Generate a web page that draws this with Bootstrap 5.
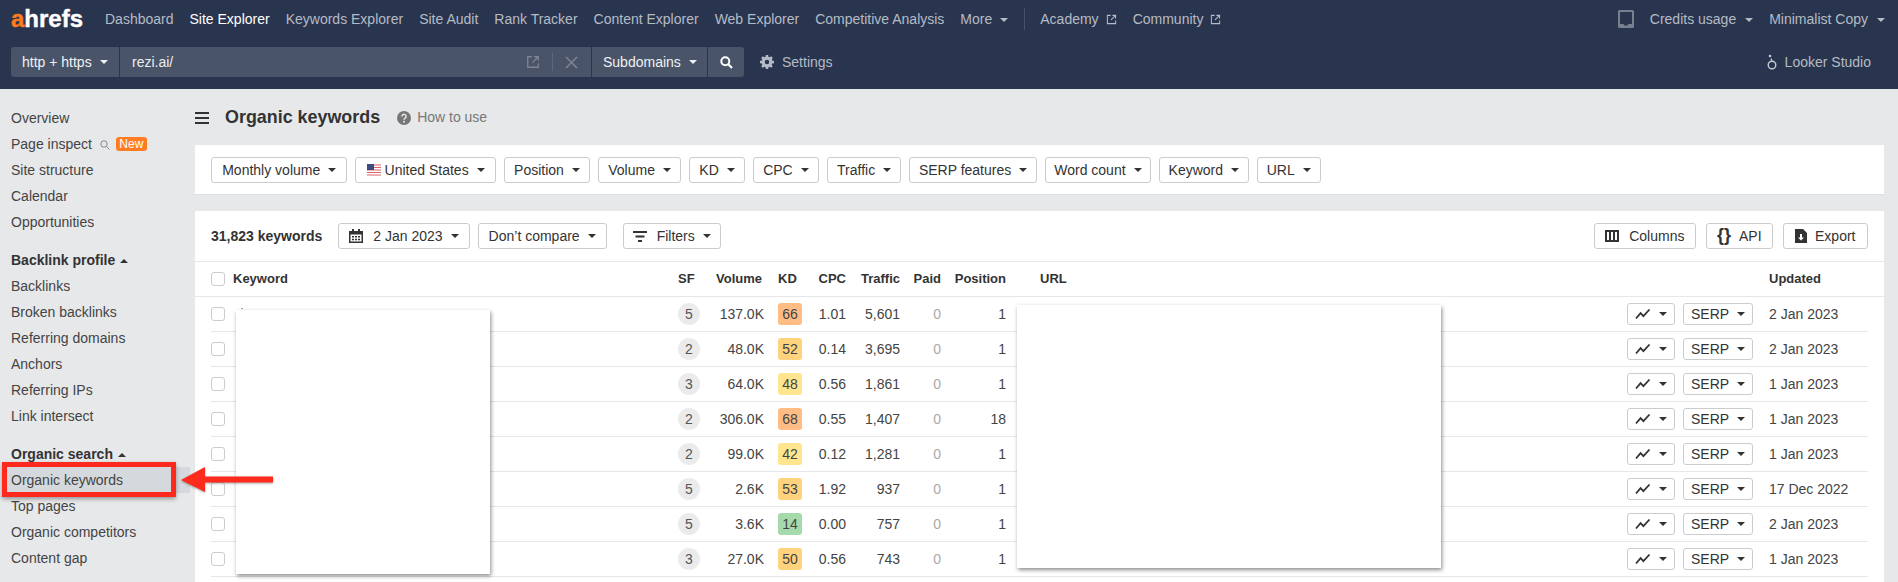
<!DOCTYPE html>
<html lang="en">
<head>
<meta charset="utf-8">
<title>Organic keywords</title>
<link href="https://cdn.jsdelivr.net/npm/bootstrap@5.3.0/dist/css/bootstrap.min.css" rel="stylesheet">
<style>
html,body{height:582px;overflow:hidden}
body{background:#e7e8ea;font-family:"Liberation Sans",Arial,sans-serif;font-size:14px;color:#333;position:relative}
.ah-head{background:#29354e;height:89px;color:#b5bbc6}
.ah-top{height:38px;padding:0 13px 0 11px}
.ah-logo{font-size:24px;font-weight:700;color:#fff;line-height:1;margin-right:21px;width:73px;text-decoration:none;-webkit-text-stroke:.4px currentColor}
.ah-logo b{color:#ff7a1c}
.ah-link{color:#b5bbc6;text-decoration:none;margin-right:16px;white-space:nowrap}
.ah-link.on{color:#fff}
.ah-link svg{margin-left:7px;vertical-align:-1px}
.ah-sep{width:1px;height:22px;background:#465067;margin:0 15px 0 16px}
.ah-caret::after{display:inline-block;content:"";margin-left:8px;vertical-align:2px;border-top:.3em solid;border-right:.3em solid transparent;border-left:.3em solid transparent}
.ah-top-right .ah-caret::after{margin-left:9px}
.ah-search{margin-top:9px;padding:0 27px 0 11px;height:30px}
.ah-box{background:#495468;height:30px;display:flex;align-items:center;color:#f0f1f3}
.ah-box+.ah-box{margin-left:1px}
.ah-proto{width:108px;padding-left:11px;border-radius:3px 0 0 3px}
.ah-url{width:471px;padding:0 13px 0 12px;color:#eceef0}
.ah-sub{width:115px;padding-left:11px}
.ah-go{width:36px;justify-content:center;border-radius:0 3px 3px 0}
.ah-divv{width:1px;height:18px;background:#5d6779;margin:0 12px}
.ah-set{color:#b5bbc6;margin-left:16px;gap:8px}
.ah-side{width:195px;flex:none;padding:16px 0 0 11px;color:#444}
.ah-side a{display:block;height:26px;line-height:26px;color:#444;text-decoration:none;white-space:nowrap}
.ah-side .ah-group{margin-bottom:12px}
.ah-side .ah-title{height:26px;line-height:26px;font-weight:700;color:#333}
.ah-title.dropup .dropdown-toggle::after{margin-left:5px;vertical-align:2px;border-left-width:4px;border-right-width:4px;border-bottom-width:4.500px}
.ah-new{background:#ff7d22;color:#fff;font-size:12px;line-height:14px;padding:0 3.500px;border-radius:3px;display:inline-block;margin-left:6px;vertical-align:1px}
.ah-now{background:#d5d9dd;margin:0 5px 0 -4px;padding-left:4px}
.ah-main{width:1689px;flex:none}
.ah-pagehead{height:56px;padding-top:1px}
.ah-pagehead h1{font-size:17.900px;font-weight:700;margin:0 17px 0 16px;color:#333}
.ah-how{color:#777;gap:6px}
.ah-card{background:#fff;border-bottom:1px solid #dedfe1}
.ah-filters{height:50px;padding:0 16px;gap:8px;margin-bottom:16px}
.xbtn{height:26px;padding:0 10px;font-size:14px;line-height:1;color:#333;background:#fff;border:1px solid #ccc;border-radius:3px;display:inline-flex;align-items:center;white-space:nowrap;--bs-btn-hover-border-color:#ccc}
.xbtn.dropdown-toggle::after{margin-left:8px;border-top-width:4.500px;border-left-width:4px;border-right-width:4px;border-bottom:0}
.xbtn svg{flex:none}
.ah-filters .xbtn{padding:0 9.200px}
.ah-filters .xbtn.ah-wide{padding:0 10.200px}
.ah-filters .xbtn.ah-slim{padding:0 8.500px}
.xbtn.ah-pad-s{padding:0 9px}
.xbtn.ah-pad-m{padding:0 10.500px}
.xbtn.ah-pad-l{padding:0 11.500px}
.ah-icon-gap{margin-right:10px}
.ah-gap-10{margin-right:10px}
.ah-table-card{position:relative;height:400px;border:0}
.ah-bar{height:51px;border-bottom:1px solid #e6e7e9;padding:0 16px}
.ah-table{table-layout:fixed;width:1689px;margin:0;border-collapse:separate;border-spacing:0;--bs-table-color:#444}
.ah-table th,.ah-table td{height:35px;padding:0;border-bottom:1px solid #e6e7e9;vertical-align:middle;background:transparent;white-space:nowrap;box-shadow:none}
.ah-table th{font-size:13px;font-weight:700;color:#333}
.ah-table td{font-size:14px;color:#444}
.ah-table td.ah-edge{border-bottom:0}
.ah-table th.ah-volh{padding-right:2px}
.ah-table th.ah-kdh{padding-left:14px}
.ah-table th.ah-urlh{padding-left:34px}
.ah-table .form-check-input{width:14px;height:14px;margin:0;border:1px solid #ccc;border-radius:3px;display:block}
.ah-sf{width:22px;height:22px;border-radius:50%;background:#ebebeb;color:#555;display:flex;align-items:center;justify-content:center}
.ah-kd{width:24px;height:22px;border-radius:3px;margin-left:14px;display:flex;align-items:center;justify-content:center;color:#444}
.kd-o{background:#ffbd85}.kd-a{background:#ffd27d}.kd-y{background:#ffe58d}.kd-g{background:#a6d9ac}
.ah-table td.ah-paid{color:#aaa}
.xbtn.ah-row-btn{height:22px;padding:0 7px}
.ah-actions{gap:8px}
.ah-mask{position:absolute;background:#fff;box-shadow:1px 2px 4px rgba(0,0,0,.45)}
.ah-mask-l{left:41px;top:99px;width:254px;height:264px}
.ah-mask-r{left:822px;top:94px;width:424px;height:263px}
.ah-speck{position:absolute;left:46px;top:97px;width:2px;height:1px;background:#aaa}
.ah-redbox{position:absolute;left:2px;top:462px;width:174px;height:35px;border:5px solid #ff2a1e;box-shadow:0 2px 4px rgba(0,0,0,.35);pointer-events:none}
.ah-arrow{position:absolute;left:178px;top:464px;filter:drop-shadow(0 1px 1px rgba(0,0,0,.35))}
.ah-braces{font-weight:700;font-size:18px;line-height:1;margin:-3px 8px 0 0;width:14px;text-align:center}
</style>
</head>
<body>
<svg width="0" height="0" class="position-absolute">
  <symbol id="i-ext" viewBox="0 0 12 12"><path d="M5 1.500H1.500v9h9V7M7 1.500h3.500V5M10.500 1.500 5.500 6.500" fill="none" stroke="currentColor" stroke-width="1.100"/></symbol>
  <symbol id="i-trend" viewBox="0 0 16 12"><path d="M1 10.500 5.600 5.200 8.400 8.200 14.500 1.500" fill="none" stroke="#333" stroke-width="1.800"/></symbol>
</svg>

<header class="ah-head">
  <div class="ah-top d-flex align-items-center">
    <a class="ah-logo" href="#"><b>a</b>hrefs</a>
    <a class="ah-link" href="#">Dashboard</a>
    <a class="ah-link on" href="#">Site Explorer</a>
    <a class="ah-link" href="#">Keywords Explorer</a>
    <a class="ah-link" href="#">Site Audit</a>
    <a class="ah-link" href="#">Rank Tracker</a>
    <a class="ah-link" href="#">Content Explorer</a>
    <a class="ah-link" href="#">Web Explorer</a>
    <a class="ah-link" href="#">Competitive Analysis</a>
    <a class="ah-link ah-caret m-0" href="#">More</a>
    <span class="ah-sep"></span>
    <a class="ah-link" href="#">Academy<svg width="11" height="11"><use href="#i-ext"/></svg></a>
    <a class="ah-link" href="#">Community<svg width="11" height="11"><use href="#i-ext"/></svg></a>
    <div class="ah-top-right ms-auto d-flex align-items-center">
      <svg class="me-3" width="16" height="18" viewBox="0 0 16 18"><path d="M1.500 0h13A1.500 1.500 0 0 1 16 1.500v15a1.500 1.500 0 0 1-1.500 1.500h-13A1.500 1.500 0 0 1 0 16.500v-15A1.500 1.500 0 0 1 1.500 0Zm.5 2v12h3.500l1 1.500h3l1-1.500H14V2Z" fill="#78808f" fill-rule="evenodd"/></svg>
      <a class="ah-link ah-caret" href="#">Credits usage</a>
      <a class="ah-link ah-caret m-0" href="#">Minimalist Copy</a>
    </div>
  </div>
  <div class="ah-search d-flex align-items-center">
    <div class="ah-box ah-proto ah-caret">http + https</div>
    <div class="ah-box ah-url">
      <span class="flex-grow-1">rezi.ai/</span>
      <svg width="14" height="14" class="ah-exticon" style="color:#7d8695"><use href="#i-ext"/></svg>
      <span class="ah-divv"></span>
      <svg width="13" height="13" viewBox="0 0 13 13"><path d="M1 1l11 11M12 1 1 12" stroke="#7d8695" stroke-width="1.500"/></svg>
    </div>
    <div class="ah-box ah-sub ah-caret">Subdomains</div>
    <div class="ah-box ah-go"><svg width="13" height="13" viewBox="0 0 13 13"><circle cx="5.300" cy="5.300" r="4" fill="none" stroke="#fff" stroke-width="2"/><path d="M8.300 8.300 12 12" stroke="#fff" stroke-width="2.200"/></svg></div>
    <div class="ah-set d-flex align-items-center">
      <svg width="14" height="14" viewBox="0 0 16 16"><path fill="#b5bbc6" fill-rule="evenodd" d="M6.700 0h2.600l.4 2.200 1.300.5L12.800 1.500l1.800 1.800-1.200 1.800.5 1.300 2.100.400v2.600l-2.100.4-.5 1.300 1.200 1.800-1.800 1.800-1.800-1.200-1.300.5-.4 2.100H6.700l-.4-2.100-1.300-.5-1.800 1.200-1.800-1.800 1.200-1.800-.5-1.300L0 9.300V6.700l2.100-.4.500-1.300L1.400 3.300l1.800-1.800L5 2.700l1.300-.5ZM8 5.400a2.600 2.600 0 1 0 0 5.200 2.600 2.600 0 0 0 0-5.200Z"/></svg>
      <span>Settings</span>
    </div>
    <div class="ms-auto d-flex align-items-center gap-2">
      <svg width="10" height="18" viewBox="0 0 10 18"><circle cx="5" cy="12" r="3.800" fill="none" stroke="#c5cad2" stroke-width="1.400"/><circle cx="3" cy="3" r="1.300" fill="#c5cad2"/><path d="M4 5.500 5 8" stroke="#c5cad2" stroke-width="1.200"/></svg>
      <span>Looker Studio</span>
    </div>
  </div>
</header>

<div class="d-flex">
  <nav class="ah-side">
    <div class="ah-group">
      <a href="#">Overview</a>
      <a href="#">Page inspect <svg class="ms-1" width="10" height="10" viewBox="0 0 10 10"><circle cx="4" cy="4" r="3.200" fill="none" stroke="#888" stroke-width="1"/><path d="M6.400 6.400 9.500 9.500" stroke="#888" stroke-width="1"/></svg><span class="ah-new">New</span></a>
      <a href="#">Site structure</a>
      <a href="#">Calendar</a>
      <a href="#">Opportunities</a>
    </div>
    <div class="ah-group">
      <div class="ah-title dropup"><span class="dropdown-toggle">Backlink profile</span></div>
      <a href="#">Backlinks</a>
      <a href="#">Broken backlinks</a>
      <a href="#">Referring domains</a>
      <a href="#">Anchors</a>
      <a href="#">Referring IPs</a>
      <a href="#">Link intersect</a>
    </div>
    <div class="ah-group">
      <div class="ah-title dropup"><span class="dropdown-toggle">Organic search</span></div>
      <a class="ah-now" href="#">Organic keywords</a>
      <a href="#">Top pages</a>
      <a href="#">Organic competitors</a>
      <a href="#">Content gap</a>
    </div>
  </nav>

  <main class="ah-main">
    <div class="ah-pagehead d-flex align-items-center">
      <svg width="14" height="12" viewBox="0 0 14 12"><path d="M0 1h14M0 6h14M0 11h14" stroke="#333" stroke-width="2"/></svg>
      <h1>Organic keywords</h1>
      <div class="ah-how d-flex align-items-center">
        <svg width="14" height="14" viewBox="0 0 14 14"><circle cx="7" cy="7" r="7" fill="#777"/><path d="M4.900 5.400a2.100 2.100 0 1 1 3.200 1.800c-.8.500-1.100.8-1.100 1.600" fill="none" stroke="#e7e8ea" stroke-width="1.500"/><circle cx="7" cy="10.800" r="1" fill="#e7e8ea"/></svg>
        <span>How to use</span>
      </div>
    </div>

    <section class="ah-card ah-filters d-flex align-items-center">
      <button class="btn xbtn ah-wide dropdown-toggle" type="button">Monthly volume</button>
      <button class="btn xbtn ah-wide dropdown-toggle" type="button">
        <svg class="me-1" width="14" height="12" viewBox="0 0 14 12"><rect width="14" height="12" fill="#fff"/><path d="M0 1h14M0 3.500h14M0 6h14M0 8.500h14M0 11h14" stroke="#d9656b" stroke-width="1.100"/><rect width="7" height="6" fill="#3c4a80"/></svg>United States</button>
      <button class="btn xbtn dropdown-toggle" type="button">Position</button>
      <button class="btn xbtn dropdown-toggle" type="button">Volume</button>
      <button class="btn xbtn dropdown-toggle" type="button">KD</button>
      <button class="btn xbtn dropdown-toggle" type="button">CPC</button>
      <button class="btn xbtn dropdown-toggle" type="button">Traffic</button>
      <button class="btn xbtn ah-slim dropdown-toggle" type="button">SERP features</button>
      <button class="btn xbtn ah-slim dropdown-toggle" type="button">Word count</button>
      <button class="btn xbtn ah-slim dropdown-toggle" type="button">Keyword</button>
      <button class="btn xbtn dropdown-toggle" type="button">URL</button>
    </section>

    <section class="ah-card ah-table-card">
      <div class="ah-bar d-flex align-items-center">
        <strong class="me-3">31,823 keywords</strong>
        <button class="btn xbtn dropdown-toggle me-2" type="button">
          <svg class="ah-icon-gap" width="14" height="14" viewBox="0 0 14 14"><path fill="#333" fill-rule="evenodd" d="M0 2h3V0h2v2h4V0h2v2h3v12H0ZM1.500 5.500v7h11v-7ZM3 7h2v1.500H3Zm3 0h2v1.500H6Zm3 0h2v1.500H9ZM3 9.800h2v1.500H3Zm3 0h2v1.500H6Zm3 0h2v1.500H9Z"/></svg>2 Jan 2023</button>
        <button class="btn xbtn dropdown-toggle me-3" type="button">Don’t compare</button>
        <button class="btn xbtn ah-pad-s dropdown-toggle" type="button">
          <svg class="ah-icon-gap" width="14" height="11" viewBox="0 0 14 11"><path d="M0 1h14M2.500 5.500h9M5 10h4" stroke="#333" stroke-width="2"/></svg>Filters</button>
        <button class="btn xbtn ah-pad-m ms-auto ah-gap-10" type="button">
          <svg class="ah-icon-gap" width="14" height="12" viewBox="0 0 14 12"><path fill="#333" fill-rule="evenodd" d="M0 0h14v12H0ZM2 2v8h2V2Zm4 0v8h2V2Zm4 0v8h2V2Z"/></svg>Columns</button>
        <button class="btn xbtn ah-gap-10" type="button"><span class="ah-braces">{}</span>API</button>
        <button class="btn xbtn ah-pad-l" type="button">
          <svg class="me-2" width="12" height="14" viewBox="0 0 12 14"><path fill="#333" fill-rule="evenodd" d="M0 0h8l4 4v10H0Zm5 5v3.500H3l3 3 3-3H7V5Z"/></svg>Export</button>
      </div>

      <table class="table ah-table">
        <colgroup>
          <col style="width:16px"><col style="width:22px"><col style="width:445px"><col style="width:32px"><col style="width:54px"><col style="width:46px"><col style="width:36px"><col style="width:54px"><col style="width:41px"><col style="width:65px"><col style="width:621px"><col style="width:142px"><col style="width:99px"><col style="width:16px">
        </colgroup>
        <thead>
          <tr>
            <th></th><th><input class="form-check-input" type="checkbox" aria-label="Select all"></th>
            <th>Keyword</th><th>SF</th><th class="text-end ah-volh">Volume</th><th class="ah-kdh">KD</th><th class="text-end">CPC</th><th class="text-end">Traffic</th><th class="text-end">Paid</th><th class="text-end">Position</th><th class="ah-urlh">URL</th><th></th><th>Updated</th><th></th>
          </tr>
        </thead>
        <tbody>
          <tr><td class="ah-edge"></td><td><input class="form-check-input" type="checkbox" aria-label="Select"></td><td></td><td><span class="ah-sf">5</span></td><td class="text-end">137.0K</td><td><span class="ah-kd kd-o">66</span></td><td class="text-end">1.01</td><td class="text-end">5,601</td><td class="text-end ah-paid">0</td><td class="text-end">1</td><td></td><td><div class="d-flex ah-actions"><button class="btn xbtn ah-row-btn dropdown-toggle" type="button"><svg width="16" height="12"><use href="#i-trend"/></svg></button><button class="btn xbtn ah-row-btn dropdown-toggle" type="button">SERP</button></div></td><td>2 Jan 2023</td><td class="ah-edge"></td></tr>
          <tr><td class="ah-edge"></td><td><input class="form-check-input" type="checkbox" aria-label="Select"></td><td></td><td><span class="ah-sf">2</span></td><td class="text-end">48.0K</td><td><span class="ah-kd kd-a">52</span></td><td class="text-end">0.14</td><td class="text-end">3,695</td><td class="text-end ah-paid">0</td><td class="text-end">1</td><td></td><td><div class="d-flex ah-actions"><button class="btn xbtn ah-row-btn dropdown-toggle" type="button"><svg width="16" height="12"><use href="#i-trend"/></svg></button><button class="btn xbtn ah-row-btn dropdown-toggle" type="button">SERP</button></div></td><td>2 Jan 2023</td><td class="ah-edge"></td></tr>
          <tr><td class="ah-edge"></td><td><input class="form-check-input" type="checkbox" aria-label="Select"></td><td></td><td><span class="ah-sf">3</span></td><td class="text-end">64.0K</td><td><span class="ah-kd kd-y">48</span></td><td class="text-end">0.56</td><td class="text-end">1,861</td><td class="text-end ah-paid">0</td><td class="text-end">1</td><td></td><td><div class="d-flex ah-actions"><button class="btn xbtn ah-row-btn dropdown-toggle" type="button"><svg width="16" height="12"><use href="#i-trend"/></svg></button><button class="btn xbtn ah-row-btn dropdown-toggle" type="button">SERP</button></div></td><td>1 Jan 2023</td><td class="ah-edge"></td></tr>
          <tr><td class="ah-edge"></td><td><input class="form-check-input" type="checkbox" aria-label="Select"></td><td></td><td><span class="ah-sf">2</span></td><td class="text-end">306.0K</td><td><span class="ah-kd kd-o">68</span></td><td class="text-end">0.55</td><td class="text-end">1,407</td><td class="text-end ah-paid">0</td><td class="text-end">18</td><td></td><td><div class="d-flex ah-actions"><button class="btn xbtn ah-row-btn dropdown-toggle" type="button"><svg width="16" height="12"><use href="#i-trend"/></svg></button><button class="btn xbtn ah-row-btn dropdown-toggle" type="button">SERP</button></div></td><td>1 Jan 2023</td><td class="ah-edge"></td></tr>
          <tr><td class="ah-edge"></td><td><input class="form-check-input" type="checkbox" aria-label="Select"></td><td></td><td><span class="ah-sf">2</span></td><td class="text-end">99.0K</td><td><span class="ah-kd kd-y">42</span></td><td class="text-end">0.12</td><td class="text-end">1,281</td><td class="text-end ah-paid">0</td><td class="text-end">1</td><td></td><td><div class="d-flex ah-actions"><button class="btn xbtn ah-row-btn dropdown-toggle" type="button"><svg width="16" height="12"><use href="#i-trend"/></svg></button><button class="btn xbtn ah-row-btn dropdown-toggle" type="button">SERP</button></div></td><td>1 Jan 2023</td><td class="ah-edge"></td></tr>
          <tr><td class="ah-edge"></td><td><input class="form-check-input" type="checkbox" aria-label="Select"></td><td></td><td><span class="ah-sf">5</span></td><td class="text-end">2.6K</td><td><span class="ah-kd kd-a">53</span></td><td class="text-end">1.92</td><td class="text-end">937</td><td class="text-end ah-paid">0</td><td class="text-end">1</td><td></td><td><div class="d-flex ah-actions"><button class="btn xbtn ah-row-btn dropdown-toggle" type="button"><svg width="16" height="12"><use href="#i-trend"/></svg></button><button class="btn xbtn ah-row-btn dropdown-toggle" type="button">SERP</button></div></td><td>17 Dec 2022</td><td class="ah-edge"></td></tr>
          <tr><td class="ah-edge"></td><td><input class="form-check-input" type="checkbox" aria-label="Select"></td><td></td><td><span class="ah-sf">5</span></td><td class="text-end">3.6K</td><td><span class="ah-kd kd-g">14</span></td><td class="text-end">0.00</td><td class="text-end">757</td><td class="text-end ah-paid">0</td><td class="text-end">1</td><td></td><td><div class="d-flex ah-actions"><button class="btn xbtn ah-row-btn dropdown-toggle" type="button"><svg width="16" height="12"><use href="#i-trend"/></svg></button><button class="btn xbtn ah-row-btn dropdown-toggle" type="button">SERP</button></div></td><td>2 Jan 2023</td><td class="ah-edge"></td></tr>
          <tr><td class="ah-edge"></td><td><input class="form-check-input" type="checkbox" aria-label="Select"></td><td></td><td><span class="ah-sf">3</span></td><td class="text-end">27.0K</td><td><span class="ah-kd kd-a">50</span></td><td class="text-end">0.56</td><td class="text-end">743</td><td class="text-end ah-paid">0</td><td class="text-end">1</td><td></td><td><div class="d-flex ah-actions"><button class="btn xbtn ah-row-btn dropdown-toggle" type="button"><svg width="16" height="12"><use href="#i-trend"/></svg></button><button class="btn xbtn ah-row-btn dropdown-toggle" type="button">SERP</button></div></td><td>1 Jan 2023</td><td class="ah-edge"></td></tr>
        </tbody>
      </table>
      <div class="ah-speck"></div>
      <div class="ah-mask ah-mask-l"></div>
      <div class="ah-mask ah-mask-r"></div>
    </section>
  </main>
</div>

<div class="ah-redbox"></div>
<svg class="ah-arrow" width="98" height="32" viewBox="178 464 98 32"><path d="M181 480 205 467V476.500H273V482.500H205V492Z" fill="#ff2a1e"/></svg>
</body>
</html>
